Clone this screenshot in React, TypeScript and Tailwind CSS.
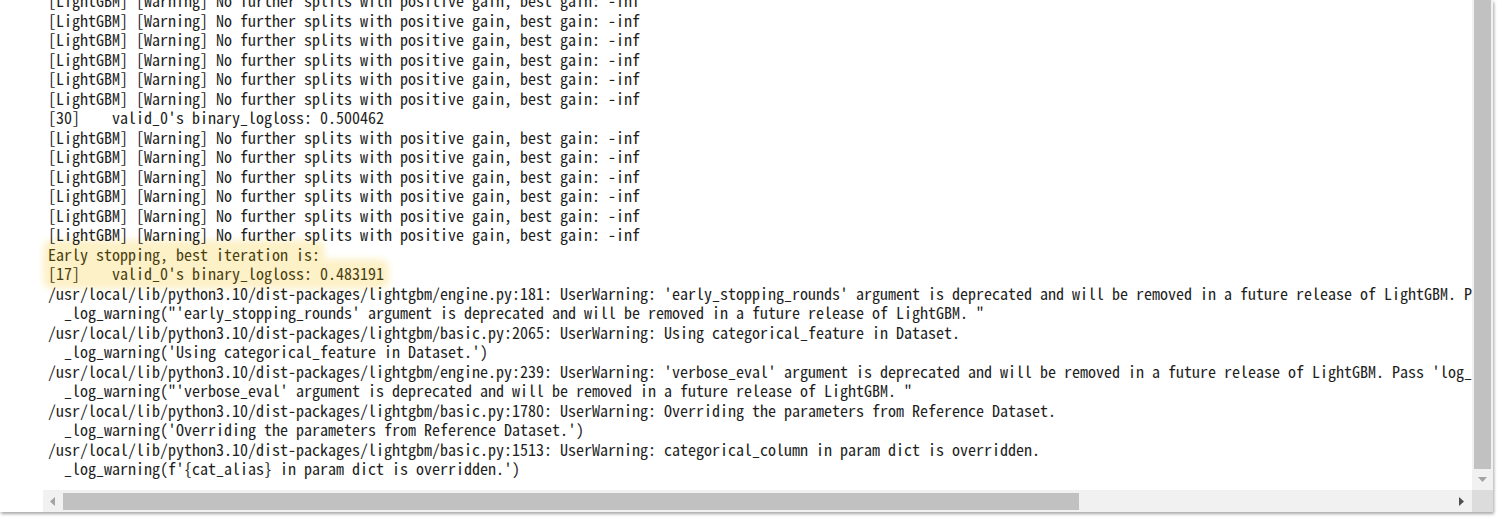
import React from 'react';

const warn = '[LightGBM] [Warning] No further splits with positive gain, best gain: -inf';

const lines: { text: string; hl?: boolean }[] = [
  { text: warn },
  { text: warn },
  { text: warn },
  { text: warn },
  { text: warn },
  { text: warn },
  { text: "[30]    valid_0's binary_logloss: 0.500462" },
  { text: warn },
  { text: warn },
  { text: warn },
  { text: warn },
  { text: warn },
  { text: warn },
  { text: 'Early stopping, best iteration is:', hl: true },
  { text: "[17]    valid_0's binary_logloss: 0.483191", hl: true },
  { text: "/usr/local/lib/python3.10/dist-packages/lightgbm/engine.py:181: UserWarning: 'early_stopping_rounds' argument is deprecated and will be removed in a future release of LightGBM. Pass 'log_evaluation()' callback via 'callbacks' argument instead." },
  { text: `  _log_warning("'early_stopping_rounds' argument is deprecated and will be removed in a future release of LightGBM. "` },
  { text: '/usr/local/lib/python3.10/dist-packages/lightgbm/basic.py:2065: UserWarning: Using categorical_feature in Dataset.' },
  { text: "  _log_warning('Using categorical_feature in Dataset.')" },
  { text: "/usr/local/lib/python3.10/dist-packages/lightgbm/engine.py:239: UserWarning: 'verbose_eval' argument is deprecated and will be removed in a future release of LightGBM. Pass 'log_evaluation()' callback via 'callbacks' argument instead." },
  { text: `  _log_warning("'verbose_eval' argument is deprecated and will be removed in a future release of LightGBM. "` },
  { text: '/usr/local/lib/python3.10/dist-packages/lightgbm/basic.py:1780: UserWarning: Overriding the parameters from Reference Dataset.' },
  { text: "  _log_warning('Overriding the parameters from Reference Dataset.')" },
  { text: '/usr/local/lib/python3.10/dist-packages/lightgbm/basic.py:1513: UserWarning: categorical_column in param dict is overridden.' },
  { text: "  _log_warning(f'{cat_alias} in param dict is overridden.')" },
];

const App: React.FC = () => {
  return (
    <div className="w-[1512px] h-[520px] bg-white overflow-hidden">
      <div className="w-[1493px] h-[512px] flex flex-col bg-white shadow-[1px_2px_3px_rgba(0,0,0,0.35)]">
        {/* output area + vertical scrollbar */}
        <div className="flex h-[490px]">
          <div className="flex-1 overflow-hidden pl-[48px]">
            <pre
              className="mt-[-9px] text-[16px] leading-[19.5px] text-[#1e1e1e] whitespace-pre"
              style={{ fontFamily: '"Noto Sans Mono CJK JP", "Liberation Mono", monospace' }}
            >
              {lines.map((l, i) =>
                l.hl ? (
                  <div key={i} className="h-[19.5px]">
                    <span className="relative inline-block">
                      {/* glow sits under every line of text */}
                      <span className="absolute inset-0 z-0 bg-[#fdf1c8] shadow-[0_0_7px_5px_#fdf1c8] rounded-sm" />
                      <span className="relative z-10 text-[#4b3f12]">{l.text}</span>
                    </span>
                  </div>
                ) : (
                  <div key={i} className="h-[19.5px] relative z-10">
                    {l.text}
                  </div>
                )
              )}
            </pre>
          </div>
          <div className="w-[21px] bg-[#f1f1f1] flex flex-col items-center">
            <div className="w-[17px] h-[469px] bg-[#c1c1c1]" />
            <div className="flex-1 flex items-center justify-center">
              <svg width="9" height="6" viewBox="0 0 9 6">
                <path d="M0 0 L9 0 L4.5 5 Z" fill="#a3a3a3" />
              </svg>
            </div>
          </div>
        </div>
        {/* horizontal scrollbar row */}
        <div className="flex h-[22px]">
          <div className="w-[43px] bg-white" />
          <div className="flex-1 bg-[#f1f1f1] flex items-center">
            <div className="w-[20px] flex justify-center">
              <svg width="6" height="9" viewBox="0 0 6 9">
                <path d="M5 0 L5 9 L0 4.5 Z" fill="#a3a3a3" />
              </svg>
            </div>
            <div className="w-[1016px] h-[17px] bg-[#c1c1c1]" />
            <div className="flex-1" />
            <div className="w-[20px] flex justify-center">
              <svg width="6" height="9" viewBox="0 0 6 9">
                <path d="M0 0 L0 9 L5 4.5 Z" fill="#505050" />
              </svg>
            </div>
          </div>
          <div className="w-[21px] bg-[#dcdcdc]" />
        </div>
      </div>
    </div>
  );
};

export default App;
